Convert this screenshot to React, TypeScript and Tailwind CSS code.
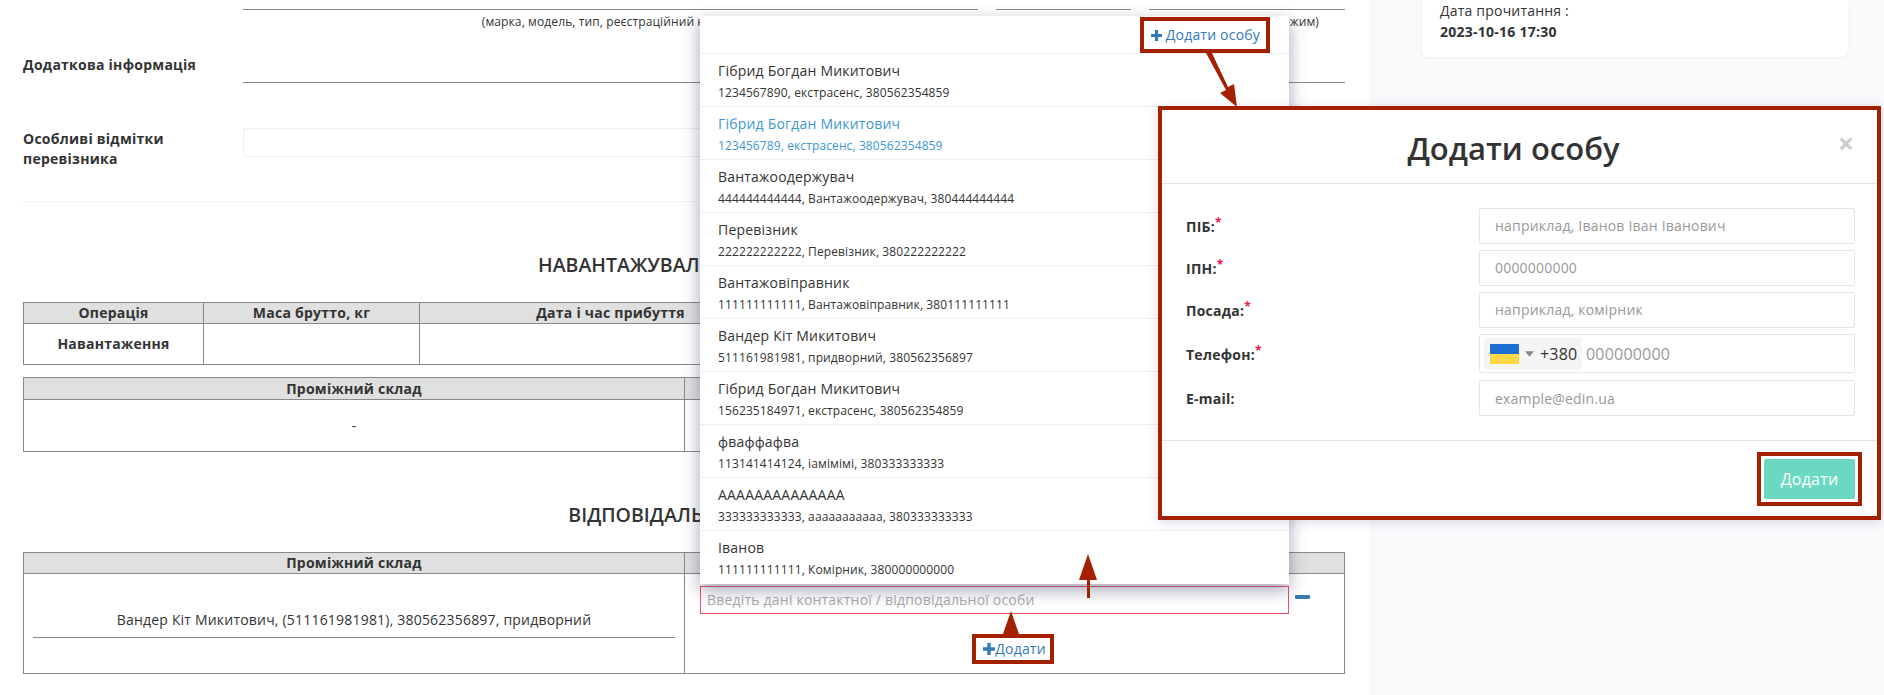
const people = [
  { name: 'Гібрид Богдан Микитович', info: '1234567890, екстрасенс, 380562354859' },
  { name: 'Гібрид Богдан Микитович', info: '123456789, екстрасенс, 380562354859', active: true },
  { name: 'Вантажоодержувач', info: '444444444444, Вантажоодержувач, 380444444444' },
  { name: 'Перевізник', info: '222222222222, Перевізник, 380222222222' },
  { name: 'Вантажовіправник', info: '111111111111, Вантажовіправник, 380111111111' },
  { name: 'Вандер Кіт Микитович', info: '511161981981, придворний, 380562356897' },
  { name: 'Гібрид Богдан Микитович', info: '156235184971, екстрасенс, 380562354859' },
  { name: 'фваффафва', info: '113141414124, іамімімі, 380333333333' },
  { name: 'АААААААААААААА', info: '333333333333, ааааааааааа, 380333333333' },
  { name: 'Іванов', info: '111111111111, Комірник, 380000000000' },
];

const modalFields = [
  { label: 'ПІБ:', required: true, placeholder: 'наприклад, Іванов Іван Іванович' },
  { label: 'ІПН:', required: true, placeholder: '0000000000' },
  { label: 'Посада:', required: true, placeholder: 'наприклад, комірник' },
];

const PlusIcon = ({ className }: { className: string }) => (
  <svg viewBox="0 0 12 12" className={className} fill="currentColor">
    <path d="M4.3 0h3.4v4.3H12v3.4H7.7V12H4.3V7.7H0V4.3h4.3z" />
  </svg>
);

const FieldLabel = ({ label, required }: { label: string; required?: boolean }) => (
  <div className="w-[293px] shrink-0 pt-[2px] text-sm leading-5 font-bold tracking-[0.25px] text-[#333]">
    {label}
    {required && <span className="text-[#f0134d] text-xs leading-none font-bold align-[5px]">*</span>}
  </div>
);

const App = () => {
  return (
    <div
      className="relative flex w-full h-[695px] overflow-hidden bg-white text-sm tracking-[0.2px] text-[#333]"
      style={{ fontFamily: '"Open Sans", sans-serif' }}
    >
      {/* Document */}
      <main className="w-[1369px] shrink-0 pl-[23px] pr-[24px] pt-[9px]">
        <div className="flex gap-[18px] pl-[220px]">
          <div className="w-[735px] border-t border-[#888]" />
          <div className="w-[135px] border-t border-[#888]" />
          <div className="flex-1 border-t border-[#888]" />
        </div>
        <div className="flex gap-[18px] pl-[220px] text-xs tracking-[0.11px] leading-[24px] h-[24px]">
          <div className="w-[735px] text-center whitespace-nowrap">(марка, модель, тип, реєстраційний номер)</div>
          <div className="w-[135px]" />
          <div className="flex-1 text-right pr-[26px] whitespace-nowrap">(режим)</div>
        </div>

        <div className="flex mt-[16px]">
          <div className="w-[220px] shrink-0 font-bold tracking-[0.25px] leading-5 pt-[5px]">Додаткова інформація</div>
          <div className="flex-1 h-[33px] border-b border-[#888]" />
        </div>

        <div className="flex mt-[45px]">
          <div className="w-[220px] shrink-0 font-bold tracking-[0.25px] leading-5 pt-[1px]">
            Особливі відмітки
            <br />
            перевізника
          </div>
          <div className="flex-1 h-[29px] border border-[#eee] rounded-[2px]" />
        </div>

        <div className="mt-[32px] border-t border-dotted border-[#e5e5e5]" />

        <h2 className="mt-[51px] text-center text-[19.5px] tracking-normal leading-6 font-semibold">
          НАВАНТАЖУВАЛЬНІ ОПЕРАЦІЇ
        </h2>

        <table className="mt-[25px] w-full table-fixed border-collapse border border-[#888]">
          <thead>
            <tr className="h-[21px] bg-[#e0e0e0] font-bold tracking-[0.25px] leading-5">
              <th className="w-[180px] border border-[#888]">Операція</th>
              <th className="w-[216px] border border-[#888]">Маса брутто, кг</th>
              <th className="w-[382px] border border-[#888]">Дата і час прибуття</th>
              <th className="border border-[#888]">Дата і час вибуття</th>
            </tr>
          </thead>
          <tbody>
            <tr className="h-[41px]">
              <td className="border border-[#888] text-center font-bold tracking-[0.25px]">Навантаження</td>
              <td className="border border-[#888]" />
              <td className="border border-[#888]" />
              <td className="border border-[#888]" />
            </tr>
          </tbody>
        </table>

        <table className="mt-[12px] w-full table-fixed border-collapse border border-[#888]">
          <thead>
            <tr className="h-[22px] bg-[#e0e0e0] font-bold tracking-[0.25px] leading-5">
              <th className="w-[661px] border border-[#888]">Проміжний склад</th>
              <th className="border border-[#888]">Кінцевий склад</th>
            </tr>
          </thead>
          <tbody>
            <tr className="h-[52px]">
              <td className="border border-[#888] text-center">-</td>
              <td className="border border-[#888] text-center">-</td>
            </tr>
          </tbody>
        </table>

        <h2 className="mt-[51px] text-center text-[19.5px] tracking-normal leading-6 font-semibold">
          ВІДПОВІДАЛЬНІ ОСОБИ
        </h2>

        <table className="mt-[25px] w-full table-fixed border-collapse border border-[#888]">
          <thead>
            <tr className="h-[21px] bg-[#e0e0e0] font-bold tracking-[0.25px] leading-5">
              <th className="w-[661px] border border-[#888]">Проміжний склад</th>
              <th className="border border-[#888]">Кінцевий склад</th>
            </tr>
          </thead>
          <tbody>
            <tr className="h-[100px]">
              <td className="border border-[#888] align-top px-[9px] pt-[36px]">
                <div className="h-[28px] border-b border-[#888] text-center leading-5">
                  Вандер Кіт Микитович, (511161981981), 380562356897, придворний
                </div>
              </td>
              <td className="border border-[#888] align-top pl-[15px] pt-[12px]">
                <div className="flex items-center gap-[6px]">
                  <div className="w-[589px] h-[28px] border border-[#f04d63] pl-[6px] leading-[26px] text-[#aaa] whitespace-nowrap">
                    Введіть дані контактної / відповідальної особи
                  </div>
                  <div className="w-[15px] h-[4px] rounded-[1px] bg-[#337ab7] -translate-y-[3px]" />
                </div>
                <div className="flex items-center justify-center w-[589px] pl-[40px] mt-[25px] text-[#337ab7] leading-5">
                  <PlusIcon className="w-3 h-3" />
                  Додати
                </div>
              </td>
            </tr>
          </tbody>
        </table>
      </main>

      {/* Side panel */}
      <aside className="flex-1 bg-[#f8f9fb] pl-[53px] pr-[36px]">
        <div className="h-[57px] bg-white rounded-b-md shadow-[0_1px_3px_rgba(0,0,0,0.05)] pl-[18px] leading-[21px]">
          <div>Дата прочитання :</div>
          <div className="font-bold tracking-[0.25px]">2023-10-16 17:30</div>
        </div>
      </aside>

      {/* Dropdown with people */}
      <div className="absolute left-[700px] top-[16px] w-[589px] bg-white shadow-[0_6px_16px_rgba(50,55,95,0.45)]">
        <div className="h-[38px] flex items-center justify-end gap-[4px] pr-[29px] pt-[1px] text-[#337ab7] border-b border-[#eee]">
          <PlusIcon className="w-[11px] h-[11px]" />
          Додати особу
        </div>
        {people.map((p, i) => (
          <div
            key={i}
            className={`h-[53px] pl-[18px] pt-[5px] border-b border-[#eee] last:border-b-0 ${p.active ? 'text-[#3c97d3]' : ''}`}
          >
            <div className="leading-[24px] whitespace-nowrap">{p.name}</div>
            <div className="mt-[1px] text-xs tracking-[0.11px] leading-[18px] whitespace-nowrap">{p.info}</div>
          </div>
        ))}
      </div>

      {/* Add person modal */}
      <div className="absolute left-[1158px] top-[106px] w-[723px] h-[414px] border-4 border-[#a32000] bg-white shadow-[0_2px_10px_rgba(90,70,140,0.2)] flex flex-col">
        <div className="relative h-[74px] shrink-0 pt-[4px] pr-[12px] flex items-center justify-center border-b border-[#e5e5e5] text-[31px] tracking-normal font-semibold">
          Додати особу
          <span className="absolute right-[23px] top-[19px] text-[28px] leading-none font-bold text-[#ccc]">×</span>
        </div>
        <div className="flex-1 pl-[24px] pr-[22px] pt-[24px] flex flex-col gap-[6px]">
          {modalFields.map(f => (
            <div key={f.label} className="flex items-center">
              <FieldLabel label={f.label} required={f.required} />
              <div className="flex-1 h-[36px] border border-[#e5e5e5] rounded-[2px] pl-[15px] leading-[34px] text-[#999]">
                {f.placeholder}
              </div>
            </div>
          ))}
          <div className="flex items-center">
            <FieldLabel label="Телефон:" required />
            <div className="flex-1 h-[39px] border border-[#e5e5e5] rounded-[2px] flex items-center pl-[4px] text-base">
              <div className="w-[98px] h-[32px] rounded-[3px] bg-[#f5f5f5] flex items-center pl-[6px]">
                <div className="w-[29px] h-[20px] shrink-0 flex flex-col rounded-[1px] overflow-hidden">
                  <div className="flex-1 bg-[#1a6fd0]" />
                  <div className="flex-1 bg-[#ffd84a]" />
                </div>
                <svg viewBox="0 0 10 6" className="w-[9px] h-[6px] ml-[6px] shrink-0 text-[#888]" fill="currentColor">
                  <path d="M0 0h10L5 6z" />
                </svg>
                <span className="ml-[6px]">+380</span>
              </div>
              <span className="ml-[4px] text-[#999]">000000000</span>
            </div>
          </div>
          <div className="flex items-center mt-[1px]">
            <FieldLabel label="E-mail:" />
            <div className="flex-1 h-[36px] border border-[#e5e5e5] rounded-[2px] pl-[15px] leading-[36px] text-[#999]">
              example@edin.ua
            </div>
          </div>
        </div>
        <div className="h-[76px] shrink-0 border-t border-[#e5e5e5] flex justify-end pt-[11px] pr-[15px]">
          <div className="w-[105px] h-[54px] border-4 border-[#a32000] p-[3px]">
            <div className="h-full bg-[#6bd9c1] rounded-[2px] text-white text-base flex items-center justify-center">
              Додати
            </div>
          </div>
        </div>
      </div>

      {/* Annotations */}
      <div className="absolute left-[1140px] top-[17px] w-[130px] h-[36px] border-4 border-[#a32000]" />
      <div className="absolute left-[972px] top-[634px] w-[82px] h-[30px] border-4 border-[#a32000]" />
      <svg className="absolute left-0 top-0 w-[1884px] h-[695px] pointer-events-none" viewBox="0 0 1884 695" fill="#a32000">
        <path d="M1206 53l5-2 17 36 6-3 3 23-17-14 6-3z" />
        <path d="M1087 580h-8l9-26 9 26h-7v18h-3z" />
        <path d="M1003 634l8-23 8 23z" />
      </svg>
    </div>
  );
};

export default App;
